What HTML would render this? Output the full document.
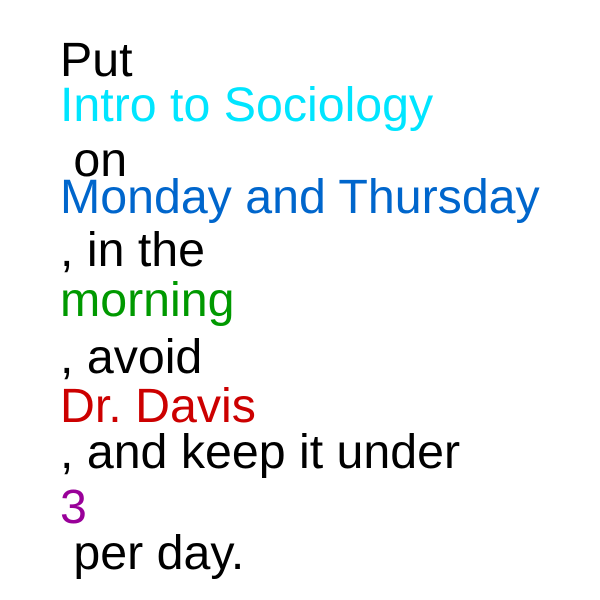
<!DOCTYPE html>
<html><head><meta charset="utf-8"><style>
html,body{margin:0;padding:0;background:#fff;width:600px;height:600px;overflow:hidden}
div{position:absolute;left:60px;font-family:"Liberation Sans",Arial,sans-serif;font-size:48.3px;line-height:48px;white-space:pre;color:#000}
</style></head><body>
<div style="top:36px">Put</div>
<div style="top:81px;color:#00e5ff">Intro to Sociology</div>
<div style="top:136px"> on</div>
<div style="top:173px;color:#0066cc">Monday and Thursday</div>
<div style="top:226px">, in the</div>
<div style="top:276px;color:#009900">morning</div>
<div style="top:333px">, avoid</div>
<div style="top:382px;color:#cc0000">Dr. Davis</div>
<div style="top:428px">, and keep it under</div>
<div style="top:483px;color:#990099">3</div>
<div style="top:529px"> per day.</div>
</body></html>
